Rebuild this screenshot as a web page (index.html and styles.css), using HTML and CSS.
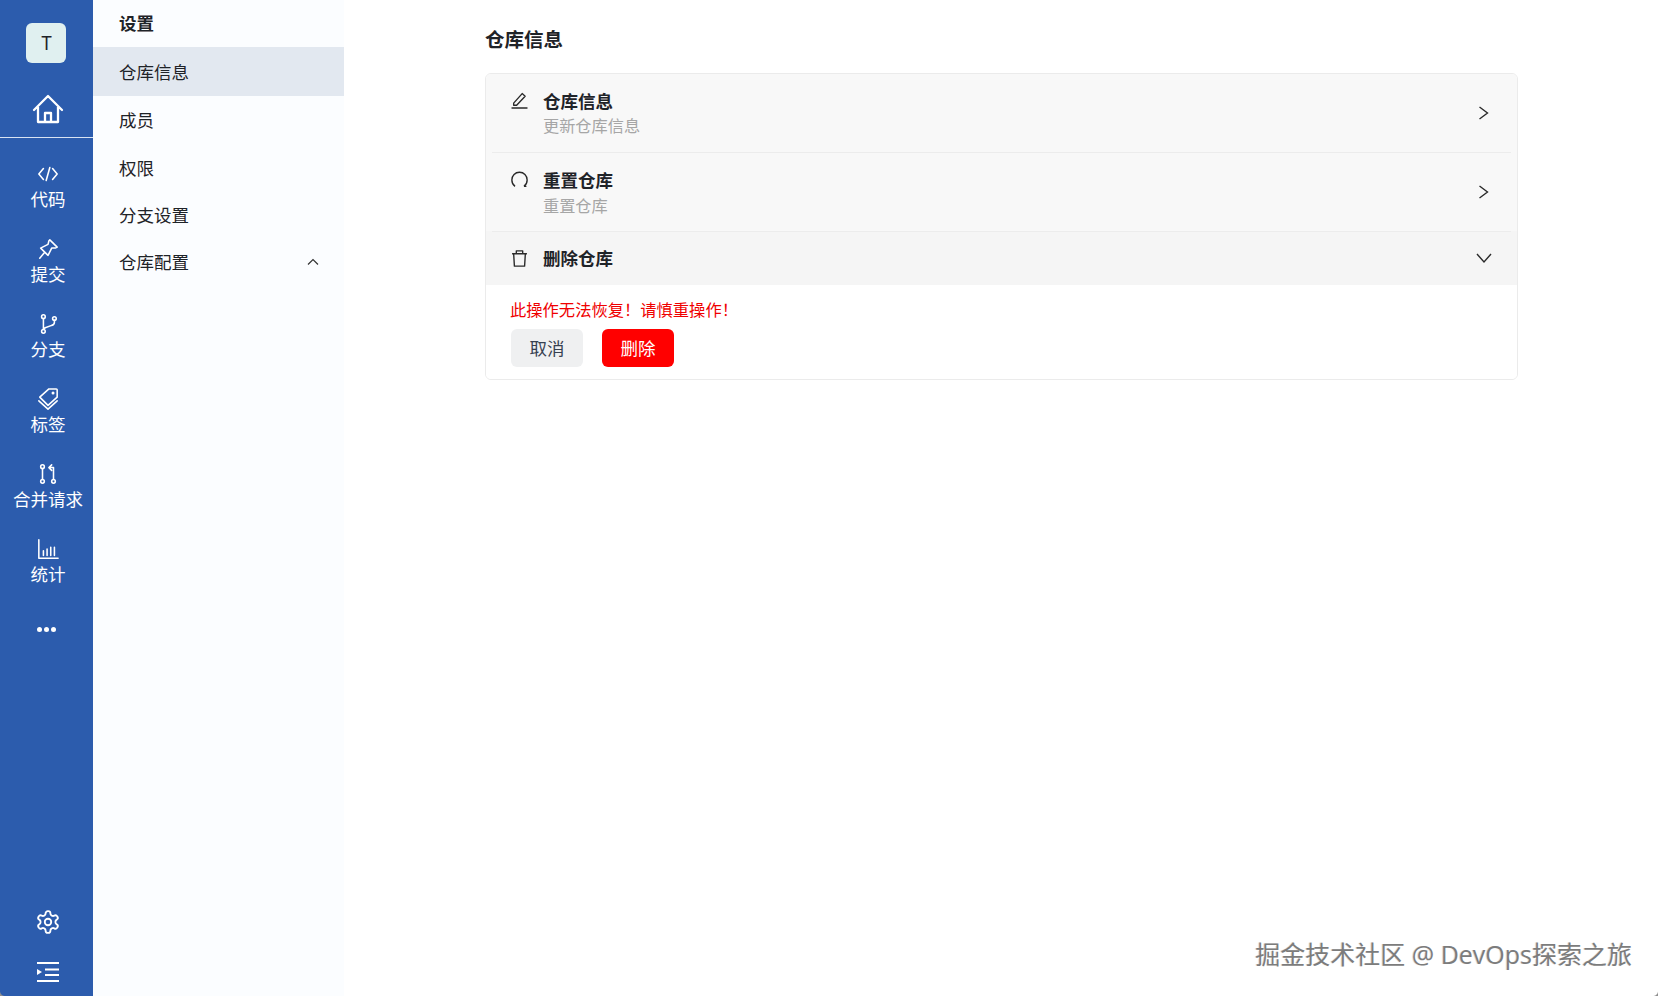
FILE: index.html
```html
<!DOCTYPE html>
<html lang="zh-CN">
<head>
<meta charset="utf-8">
<title>仓库信息</title>
<link rel="stylesheet" href="styles.css">
</head>
<body>
<div class="app">
  <aside class="rail">
    <div class="rail-top">
      <div class="avatar">T</div>
      <svg class="home" viewBox="0 0 32 32"><path d="M2 17 16 3l14 14M6 14v15h20V14M13 29v-9h6v9"/></svg>
    </div>
    <nav class="rail-nav">
      <a class="rail-item">
        <svg viewBox="0 0 24 24"><path d="M7 6 2 12l5 6M17 6l5 6-5 6M14 5l-4 14"/></svg>
        <span>代码</span>
      </a>
      <a class="rail-item">
        <svg viewBox="0 0 24 24"><path d="m14 2 8 8-2 1-4 0-3 6-1 2-8-8 2-1 6-3 1-4zM8 16l-5 6"/></svg>
        <span>提交</span>
      </a>
      <a class="rail-item">
        <svg viewBox="0 0 24 24"><circle cx="7" cy="4" r="2"/><circle cx="7" cy="20" r="2"/><circle cx="19" cy="6" r="2"/><path d="M7 6v12M19 8v2c0 2-1 3-3 3.500L9 16 7 18"/></svg>
        <span>分支</span>
      </a>
      <a class="rail-item">
        <svg viewBox="0 0 24 24"><path d="M13 1h8a1 1 0 0 1 1 1v8L12 19 3 10zM2 14l10 9 10-9"/><circle cx="17.500" cy="5.500" r=".8"/></svg>
        <span>标签</span>
      </a>
      <a class="rail-item">
        <svg viewBox="0 0 24 24"><circle cx="6" cy="4" r="2"/><circle cx="6" cy="20" r="2"/><circle cx="18" cy="20" r="2"/><path d="M6 6v12M18 18V5h-4M16 2l-3 3 3 3"/></svg>
        <span>合并请求</span>
      </a>
      <a class="rail-item">
        <svg viewBox="0 0 24 24"><path d="M2 2v20h21M7 19v-5M11 19v-7M15 19v-9M19 19v-9"/></svg>
        <span>统计</span>
      </a>
    </nav>
    <div class="rail-more"><i></i><i></i><i></i></div>
    <div class="rail-bottom">
      <svg class="gear" viewBox="0 0 24 24"><circle cx="12" cy="12" r="3"/><path d="M12.220 2h-.44a2 2 0 0 0-2 2v.18a2 2 0 0 1-1 1.730l-.43.25a2 2 0 0 1-2 0l-.15-.08a2 2 0 0 0-2.730.73l-.22.38a2 2 0 0 0 .73 2.730l.15.1a2 2 0 0 1 1 1.720v.51a2 2 0 0 1-1 1.740l-.15.09a2 2 0 0 0-.73 2.730l.22.38a2 2 0 0 0 2.730.73l.15-.08a2 2 0 0 1 2 0l.43.25a2 2 0 0 1 1 1.730V20a2 2 0 0 0 2 2h.44a2 2 0 0 0 2-2v-.18a2 2 0 0 1 1-1.730l.43-.25a2 2 0 0 1 2 0l.15.08a2 2 0 0 0 2.730-.73l.22-.39a2 2 0 0 0-.73-2.730l-.15-.08a2 2 0 0 1-1-1.740v-.5a2 2 0 0 1 1-1.740l.15-.09a2 2 0 0 0 .73-2.730l-.22-.38a2 2 0 0 0-2.730-.73l-.15.08a2 2 0 0 1-2 0l-.43-.25a2 2 0 0 1-1-1.730V4a2 2 0 0 0-2-2z"/></svg>
      <svg class="indent" viewBox="0 0 24 20"><path class="thick" d="M1 1h22M9 7.500h14M9 13h14M1 19h22"/><path class="solid" d="M1 7l5 3-5 3z"/></svg>
    </div>
  </aside>

  <aside class="panel">
    <div class="panel-title">设置</div>
    <a class="panel-item active">仓库信息</a>
    <a class="panel-item">成员</a>
    <a class="panel-item">权限</a>
    <a class="panel-item">分支设置</a>
    <a class="panel-item">
      <span>仓库配置</span>
      <svg class="caret" viewBox="0 0 12 12"><path d="m1 8.500 5-5 5 5"/></svg>
    </a>
  </aside>

  <main class="main">
    <h1 class="heading">仓库信息</h1>
    <section class="card">
      <div class="row">
        <svg class="row-icon" viewBox="0 0 16 16"><path d="M2.500 10.500 10.500 1.500l2.800 2.500-8 8.500H2.500zM.5 15h15"/></svg>
        <div class="row-text">
          <div class="row-title">仓库信息</div>
          <div class="row-sub">更新仓库信息</div>
        </div>
        <svg class="chev" viewBox="0 0 16 16"><path d="m3.500 2 8 6-8 6"/></svg>
      </div>
      <div class="row row-second">
        <svg class="row-icon" viewBox="0 0 16 16"><path d="M3.800 14.500C1.800 13 .8 11 .8 8.500.8 4.300 3.900 1.200 8 1.200s7.200 3.100 7.200 7.300c0 2.500-1 4.500-3 6M12.200 14.500h2.300"/></svg>
        <div class="row-text">
          <div class="row-title">重置仓库</div>
          <div class="row-sub">重置仓库</div>
        </div>
        <svg class="chev" viewBox="0 0 16 16"><path d="m3.500 2 8 6-8 6"/></svg>
      </div>
      <div class="row row-open">
        <svg class="row-icon" viewBox="0 0 16 16"><path d="M1 3.500h14M2.500 3.500 3.200 15.200h9.600l.7-11.700M5 3.500V.8h6v2.700"/></svg>
        <div class="row-title">删除仓库</div>
        <svg class="chev" viewBox="0 0 16 16"><path d="m1 4 7 8 7-8"/></svg>
      </div>
      <div class="danger">
        <p class="warn">此操作无法恢复！请慎重操作！</p>
        <div class="actions">
          <button class="btn btn-cancel">取消</button>
          <button class="btn btn-delete">删除</button>
        </div>
      </div>
    </section>
  </main>
</div>
<div class="watermark">掘金技术社区 @ DevOps探索之旅</div>
</body>
</html>
```

FILE: styles.css
```css
* { box-sizing: border-box; }
html, body { margin: 0; height: 100%; overflow: hidden; }
body {
  font-family: "Inter", "Noto Sans CJK SC", sans-serif;
  color: #1f2328;
  background: #fff;
}
.app { display: flex; height: 996px; position: relative; }
.app::before,
.app::after {
  content: "";
  position: absolute;
  bottom: 0;
  width: 5px;
  height: 5px;
}
.app::before { left: 0; background: radial-gradient(circle at top right, transparent 4.500px, #8f8f8f 5.500px); }
.app::after { right: 0; background: radial-gradient(circle at top left, transparent 4.500px, #8f8f8f 5.500px); }

.rail {
  width: 93px;
  flex: none;
  background: #2c5cad;
  color: #fff;
  display: flex;
  flex-direction: column;
}
.rail svg { fill: none; stroke: #fff; stroke-width: 1.700; stroke-linejoin: round; stroke-linecap: round; }
.rail-top {
  height: 138px;
  border-bottom: 1px solid #d8e3f3;
  display: flex;
  flex-direction: column;
  align-items: center;
  padding-top: 23px;
}
.avatar {
  width: 40px;
  height: 40px;
  margin-right: 1px;
  border-radius: 6px;
  background: #e0f0f0;
  color: #1f2328;
  font-size: 18px;
  padding: 1px 0 0 1px;
  display: flex;
  align-items: center;
  justify-content: center;
}
.rail svg.home { width: 32px; height: 32px; margin: 30px 0 0 3px; stroke-width: 2.300; }
.rail-nav { display: flex; flex-direction: column; padding: 24px 0 0 3px; }
.rail-item {
  height: 75px;
  display: flex;
  flex-direction: column;
  align-items: center;
  font-size: 17.500px;
  line-height: 25px;
}
.rail-item svg { width: 22px; height: 24px; margin-bottom: 1px; flex: none; }
.rail-more { display: flex; justify-content: center; gap: 2px; padding: 15px 1px 0 0; }
.rail-more i { width: 5px; height: 5px; border-radius: 50%; background: #fff; }
.rail-bottom {
  margin-top: auto;
  display: flex;
  flex-direction: column;
  align-items: center;
  padding: 0 0 14px 2px;
  gap: 27px;
}
.rail svg.gear { width: 26px; height: 26px; }
.rail svg.indent { width: 24px; height: 20px; }
.rail svg .thick { stroke-linecap: butt; stroke-width: 1.800; }
.rail svg .solid { fill: #fff; stroke: none; }

.panel {
  width: 251px;
  flex: none;
  background: #fbfdff;
  display: flex;
  flex-direction: column;
}
.panel-title {
  height: 47px;
  padding: 0 26px 2px;
  display: flex;
  align-items: center;
  font-size: 17.500px;
  font-weight: 700;
}
.panel-item {
  height: 47.400px;
  padding: 0 26px;
  display: flex;
  align-items: center;
  justify-content: space-between;
  font-size: 17.500px;
}
.panel-item.active { height: 49px; background: #e2e8f0; }
.caret { width: 12px; height: 12px; fill: none; stroke: #333; stroke-width: 1.200; margin-right: -1px; }

.main { flex: 1; padding: 0 140px 0 141px; }
.heading { margin: 27px 0 19px; font-size: 19.500px; line-height: 27px; font-weight: 700; }
.card {
  border: 1px solid #ebebeb;
  border-radius: 6px;
  overflow: hidden;
}
.row {
  height: 79px;
  padding: 15px 25px 0;
  background: #f8f8f8;
  display: flex;
  align-items: flex-start;
  position: relative;
}
.row:first-child { height: 78px; }
.row + .row::before {
  content: "";
  position: absolute;
  left: 6px;
  right: 6px;
  top: 0;
  border-top: 1px solid #ececec;
}
.row-second { padding-top: 16px; }
.row-second .row-sub { line-height: 26.500px; }
.row-open { height: 54px; background: #f5f5f5; align-items: center; padding-top: 0; }
.row-icon { width: 17px; height: 17px; margin-top: 3px; fill: none; stroke: #2a2a2a; stroke-width: 1.300; flex: none; stroke-linejoin: round; }
.row-open .row-icon { margin-top: 0; }
.row-text { flex: 1; }
.row-title { margin-left: 15px; font-size: 17.500px; line-height: 25px; font-weight: 700; flex: 1; color: #1f2328; }
.row-sub { margin-left: 15px; font-size: 16.200px; line-height: 25.500px; color: #a6a6a6; }
.chev { width: 16px; height: 16px; fill: none; stroke: #2a2a2a; stroke-width: 1.400; margin-top: 16px; flex: none; }
.row-open .chev { margin-top: 0; }
.danger { padding: 12px 25px 12px 24px; background: #fff; }
.warn { margin: 0 0 6px; font-size: 16.300px; line-height: 26px; color: #f00000; }
.actions { display: flex; gap: 19px; padding-left: 1px; }
.btn {
  width: 72px;
  height: 38px;
  border: 0;
  border-radius: 6px;
  font: inherit;
  font-size: 17.500px;
  padding: 0 0 2px;
}
.btn-cancel { background: #eff0f1; color: #374151; }
.btn-delete { background: #ff0000; color: #fff; }

.watermark {
  position: absolute;
  right: 26px;
  top: 938px;
  font-size: 25px;
  line-height: 32px;
  font-family: "Open Sans", "Noto Sans CJK SC", sans-serif;
  color: #7c7c7c;
  text-shadow: 1px 1px 0 #fff, -1px 0 0 #ddd;
  white-space: nowrap;
}
```
